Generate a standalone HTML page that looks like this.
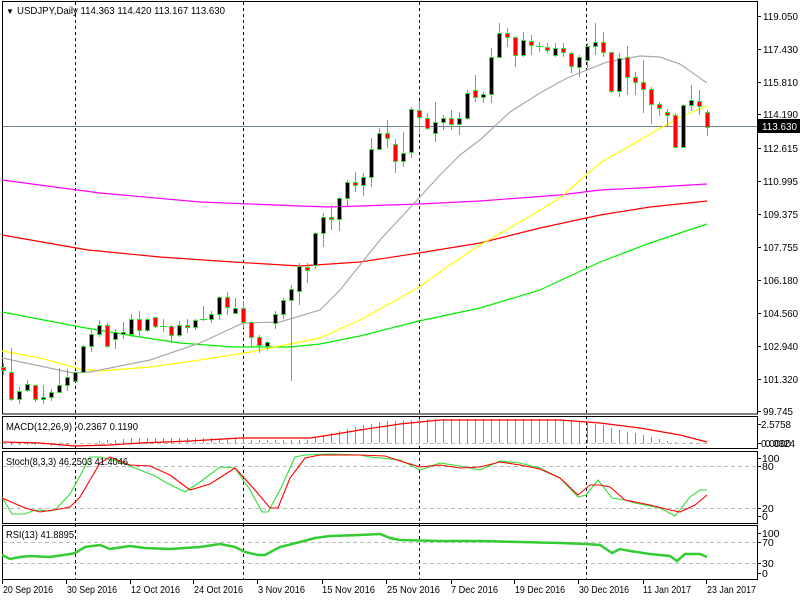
<!DOCTYPE html>
<html><head><meta charset="utf-8">
<style>
html,body{margin:0;padding:0;background:#fff;}
svg{display:block;font-family:"Liberation Sans",sans-serif;}
text{font-size:10.5px;fill:#000;}
</style></head><body>
<svg width="800" height="600" viewBox="0 0 800 600" xmlns="http://www.w3.org/2000/svg">
<rect width="800" height="600" fill="#fff"/>
<g fill="none" stroke="#000" stroke-width="1" shape-rendering="crispEdges">
<rect x="2.5" y="1.5" width="755" height="412.5"/>
<rect x="2.5" y="416.5" width="755" height="32"/>
<rect x="2.5" y="451.5" width="755" height="72"/>
<rect x="2.5" y="525.5" width="755" height="54"/>
</g>
<g stroke="#000" stroke-dasharray="3,3" shape-rendering="crispEdges">
<line x1="75.5" y1="2" x2="75.5" y2="579"/>
<line x1="243.5" y1="2" x2="243.5" y2="579"/>
<line x1="419.5" y1="2" x2="419.5" y2="579"/>
<line x1="586.5" y1="2" x2="586.5" y2="579"/>
</g>
<line x1="3" y1="126.5" x2="757" y2="126.5" stroke="#708090" shape-rendering="crispEdges"/>
<g fill="none" stroke-width="1.2">
<polyline stroke="#ff00ff" points="2,180 100,193 200,202 300,206 330,207 419,204 480,201 560,195 600,190 640,188 707,184"/>
<polyline stroke="#ff0000" points="2,235 88,250 160,257 233,262 300,266 360,262 419,253 480,243 540,228 600,215 650,207 707,201"/>
<polyline stroke="#00ee00" points="2,312 80,327 140,337 180,343 233,347 290,347 320,344 360,336 419,321 480,308 540,290 600,262 650,243 707,224"/>
<polyline stroke="#ffff00" points="2,351 40,358 80,369 100,371 150,367 200,360 250,352 280,346 320,338 360,320 400,298 419,287 450,265 480,245 520,222 560,198 600,163 640,140 680,117 707,106"/>
<polyline stroke="#a9a9a9" points="2,358 40,366 73,373 90,372 150,360 200,343 243,323 280,322 320,310 340,290 380,240 419,198 440,175 460,155 480,140 510,112 540,93 567,78 607,62 640,56 660,57 680,64 707,83"/>
</g>
<path fill="none" stroke="#22dd22" stroke-width="1" shape-rendering="crispEdges" d="
M3.5 363V375M11.5 348V401M19.5 387V404M27.5 380V392M35.5 385V402M43.5 385V404M51.5 389V401M59.5 368V393M67.5 369V391M75.5 372V382
M83.5 345V372M91.5 330V352M99.5 320V337M107.5 323V347M115.5 329V349M123.5 322V339M131.5 314V337M139.5 311V337M147.5 318V332M155.5 317V328
M163.5 319V332M171.5 325V343M179.5 321V337M187.5 319V333M195.5 319V330M203.5 306V321M211.5 311V323M219.5 296V319M227.5 292V315M235.5 298V313
M243.5 301V328M251.5 321V347M259.5 335V353M267.5 341V350M275.5 311V329M283.5 298V319M291.5 285V381M299.5 263V305M307.5 263V283M315.5 232V269
M323.5 213V247M331.5 205V230M339.5 197V231M347.5 180V206M355.5 172V192M363.5 173V196M371.5 138V187M379.5 128V149M387.5 120V148M395.5 139V173
M403.5 132V167M411.5 107V158M419.5 101V133M427.5 113V130M435.5 102V142M443.5 115V130M451.5 110V130M459.5 112V135M467.5 90V120M475.5 75V102
M483.5 92V103M491.5 48V103M499.5 23V57M507.5 28V47M515.5 37V67M523.5 32V57M531.5 35V55M539.5 42V52M547.5 43V53M555.5 43V57
M563.5 43V57M571.5 52V73M579.5 55V77M587.5 43V68M595.5 23V55M603.5 32V57M611.5 52V93M619.5 53V97M627.5 46V95M635.5 72V95
M643.5 60V113M651.5 87V124M659.5 102V116M667.5 109V126M675.5 113V147M683.5 104V148M691.5 85V111M699.5 90V115M707.5 110V136
M160 326.5H167M200 319.5H207M536 46.5H543"/>
<g stroke="#22ee22" stroke-width="1" shape-rendering="crispEdges">
<g fill="#ff0000">
<rect x="1.5" y="367.5" width="4" height="3"/><rect x="9.5" y="372.5" width="4" height="27"/><rect x="33.5" y="385.5" width="4" height="14"/>
<rect x="105.5" y="325.5" width="4" height="21"/><rect x="137.5" y="319.5" width="4" height="11"/><rect x="153.5" y="317.5" width="4" height="9"/>
<rect x="169.5" y="326.5" width="4" height="9"/><rect x="185.5" y="325.5" width="4" height="2"/><rect x="225.5" y="297.5" width="4" height="10"/>
<rect x="241.5" y="308.5" width="4" height="14"/><rect x="249.5" y="322.5" width="4" height="15"/><rect x="257.5" y="337.5" width="4" height="8"/>
<rect x="305.5" y="267.5" width="4" height="3"/><rect x="329.5" y="217.5" width="4" height="2"/><rect x="353.5" y="182.5" width="4" height="3"/>
<rect x="385.5" y="133.5" width="4" height="5"/><rect x="393.5" y="144.5" width="4" height="17"/><rect x="417.5" y="110.5" width="4" height="7"/>
<rect x="425.5" y="118.5" width="4" height="10"/><rect x="449.5" y="118.5" width="4" height="6"/><rect x="473.5" y="90.5" width="4" height="7"/>
<rect x="505.5" y="33.5" width="4" height="4"/><rect x="513.5" y="37.5" width="4" height="18"/><rect x="529.5" y="41.5" width="4" height="4"/>
<rect x="545.5" y="47.5" width="4" height="3"/><rect x="561.5" y="48.5" width="4" height="4"/><rect x="569.5" y="53.5" width="4" height="13"/>
<rect x="601.5" y="42.5" width="4" height="10"/><rect x="609.5" y="52.5" width="4" height="39"/><rect x="625.5" y="57.5" width="4" height="20"/>
<rect x="633.5" y="77.5" width="4" height="5"/><rect x="641.5" y="82.5" width="4" height="7"/><rect x="649.5" y="89.5" width="4" height="15"/>
<rect x="657.5" y="104.5" width="4" height="4"/><rect x="665.5" y="112.5" width="4" height="3"/><rect x="673.5" y="115.5" width="4" height="32"/>
<rect x="697.5" y="101.5" width="4" height="5"/><rect x="705.5" y="112.5" width="4" height="15"/>
</g>
<g fill="#000">
<rect x="17.5" y="391.5" width="4" height="8"/><rect x="25.5" y="384.5" width="4" height="6"/><rect x="41.5" y="397.5" width="4" height="2"/>
<rect x="49.5" y="392.5" width="4" height="5"/><rect x="57.5" y="385.5" width="4" height="7"/><rect x="65.5" y="377.5" width="4" height="8"/>
<rect x="73.5" y="372.5" width="4" height="9"/><rect x="81.5" y="346.5" width="4" height="26"/><rect x="89.5" y="334.5" width="4" height="12"/>
<rect x="97.5" y="325.5" width="4" height="9"/><rect x="113.5" y="332.5" width="4" height="7"/><rect x="121.5" y="332.5" width="4" height="2"/>
<rect x="129.5" y="319.5" width="4" height="15"/><rect x="145.5" y="319.5" width="4" height="11"/><rect x="177.5" y="325.5" width="4" height="10"/>
<rect x="193.5" y="320.5" width="4" height="7"/><rect x="209.5" y="314.5" width="4" height="5"/><rect x="217.5" y="297.5" width="4" height="17"/>
<rect x="233.5" y="308.5" width="4" height="5"/><rect x="265.5" y="342.5" width="4" height="4"/><rect x="273.5" y="314.5" width="4" height="9"/>
<rect x="281.5" y="300.5" width="4" height="14"/><rect x="289.5" y="289.5" width="4" height="11"/><rect x="297.5" y="266.5" width="4" height="25"/>
<rect x="313.5" y="233.5" width="4" height="32"/><rect x="321.5" y="217.5" width="4" height="16"/><rect x="337.5" y="198.5" width="4" height="21"/>
<rect x="345.5" y="182.5" width="4" height="16"/><rect x="361.5" y="177.5" width="4" height="8"/><rect x="369.5" y="149.5" width="4" height="28"/>
<rect x="377.5" y="133.5" width="4" height="16"/><rect x="401.5" y="153.5" width="4" height="8"/><rect x="409.5" y="109.5" width="4" height="43"/>
<rect x="433.5" y="122.5" width="4" height="11"/><rect x="441.5" y="118.5" width="4" height="4"/><rect x="457.5" y="118.5" width="4" height="6"/>
<rect x="465.5" y="93.5" width="4" height="25"/><rect x="481.5" y="94.5" width="4" height="3"/><rect x="489.5" y="57.5" width="4" height="37"/>
<rect x="497.5" y="33.5" width="4" height="24"/><rect x="521.5" y="40.5" width="4" height="15"/><rect x="553.5" y="48.5" width="4" height="7"/>
<rect x="577.5" y="57.5" width="4" height="10"/><rect x="585.5" y="46.5" width="4" height="14"/><rect x="593.5" y="42.5" width="4" height="4"/>
<rect x="617.5" y="58.5" width="4" height="33"/><rect x="681.5" y="105.5" width="4" height="42"/><rect x="689.5" y="100.5" width="4" height="5"/>
</g>
</g>
<text x="6" y="14" style="font-size:8px">▼</text>
<text x="17" y="14" textLength="208" lengthAdjust="spacingAndGlyphs">USDJPY,Daily  114.363 114.420 113.167 113.630</text>
<g stroke="#000" shape-rendering="crispEdges">
<path d="M757 16.5h4M757 49.5h4M757 82.5h4M757 114.5h4M757 148.5h4M757 181.5h4M757 214.5h4M757 247.5h4M757 280.5h4M757 313.5h4M757 346.5h4M757 379.5h4M757 411.5h4M757 424.5h4M757 443.5h4M757 458.5h4M757 466.5h4M757 508.5h4M757 516.5h4M757 533.5h4M757 542.5h4M757 563.5h4M757 573.5h4"/>
<path d="M2.5 580v4M66.5 580v4M130.5 580v4M193.5 580v4M257.5 580v4M322.5 580v4M386.5 580v4M451.5 580v4M514.5 580v4M578.5 580v4M643.5 580v4M706.5 580v4"/>
</g>
<g>
<text x="763" y="20" textLength="35" lengthAdjust="spacingAndGlyphs">119.050</text><text x="763" y="53" textLength="35" lengthAdjust="spacingAndGlyphs">117.430</text><text x="763" y="86" textLength="35" lengthAdjust="spacingAndGlyphs">115.810</text><text x="763" y="118" textLength="35" lengthAdjust="spacingAndGlyphs">114.190</text>
<text x="763" y="152" textLength="35" lengthAdjust="spacingAndGlyphs">112.615</text><text x="763" y="185" textLength="35" lengthAdjust="spacingAndGlyphs">110.995</text><text x="763" y="218" textLength="35" lengthAdjust="spacingAndGlyphs">109.375</text><text x="763" y="251" textLength="35" lengthAdjust="spacingAndGlyphs">107.755</text>
<text x="763" y="284" textLength="35" lengthAdjust="spacingAndGlyphs">106.180</text><text x="763" y="317" textLength="35" lengthAdjust="spacingAndGlyphs">104.560</text><text x="763" y="350" textLength="35" lengthAdjust="spacingAndGlyphs">102.940</text><text x="763" y="383" textLength="35" lengthAdjust="spacingAndGlyphs">101.320</text>
<text x="763" y="415" textLength="30" lengthAdjust="spacingAndGlyphs">99.745</text>
</g>
<rect x="758" y="119" width="42" height="14" fill="#000"/>
<text x="762" y="130" style="fill:#fff" textLength="35" lengthAdjust="spacingAndGlyphs">113.630</text>
<line x1="3" y1="443.5" x2="707" y2="443.5" stroke="#bbb" stroke-dasharray="4,3"/>
<path stroke="#33cc33" fill="none" shape-rendering="crispEdges" d="M11.5 443V445M19.5 443V445M27.5 443V445M35.5 443V445M43.5 443V445M51.5 443V446M59.5 443V446M67.5 443V446M99.5 443V441M107.5 443V440M115.5 443V440M123.5 443V439M131.5 443V438M139.5 443V438M147.5 443V438M155.5 443V438M163.5 443V438M171.5 443V438M179.5 443V438M187.5 443V438M195.5 443V438M203.5 443V438M211.5 443V438M219.5 443V438M227.5 443V438M235.5 443V438M243.5 443V438M251.5 443V440M259.5 443V440M267.5 443V440M275.5 443V440M283.5 443V440M291.5 443V440M299.5 443V440M307.5 443V440M315.5 443V437M323.5 443V435M331.5 443V433M339.5 443V431M347.5 443V429M355.5 443V427M363.5 443V425M371.5 443V424M379.5 443V422M387.5 443V421M395.5 443V421M403.5 443V420M411.5 443V420M419.5 443V419M427.5 443V419M435.5 443V419M443.5 443V419M451.5 443V419M459.5 443V419M467.5 443V419M475.5 443V419M483.5 443V419M491.5 443V419M499.5 443V419M507.5 443V419M515.5 443V419M523.5 443V419M531.5 443V419M539.5 443V419M547.5 443V419M555.5 443V419M563.5 443V420M571.5 443V421M579.5 443V422M587.5 443V423M595.5 443V424M603.5 443V425M611.5 443V428M619.5 443V430M627.5 443V432M635.5 443V433M643.5 443V435M651.5 443V437M659.5 443V439M667.5 443V441M675.5 443V442M691.5 443V442"/>
<polyline fill="none" stroke="#ff0000" stroke-width="1.2" points="2,442 40,443 75,446 110,445 140,443 190,441 240,438 265,438 310,438 330,435 360,430 400,424 440,420 500,420 560,420 600,423 640,428 680,435 707,442"/>
<text x="6" y="430" textLength="132" lengthAdjust="spacingAndGlyphs">MACD(12,26,9) -0.2367 0.1190</text>
<text x="761" y="428" textLength="30" lengthAdjust="spacingAndGlyphs">2.5758</text>
<text x="761" y="447" textLength="30" lengthAdjust="spacingAndGlyphs">0.0000</text><text x="765" y="447" textLength="30" lengthAdjust="spacingAndGlyphs">0.0324</text>
<line x1="3" y1="466.5" x2="757" y2="466.5" stroke="#bbb" stroke-dasharray="4,3"/>
<line x1="3" y1="508.5" x2="757" y2="508.5" stroke="#bbb" stroke-dasharray="4,3"/>
<polyline fill="none" stroke="#33dd33" stroke-width="1.1" points="2,497 12,514 25,514 35,510 50,511 55,510 70,494 80,476 90,457 100,457 120,462 130,466 155,476 165,482 185,492 200,482 220,467 235,468 250,490 262,512 268,512 280,490 295,457 305,455 330,454 360,455 370,457 380,458 400,460 420,470 440,463 460,466 480,470 500,461 520,463 540,468 560,478 578,497 586,495 598,480 612,498 625,500 635,503 645,505 660,508 675,516 690,497 700,490 707,490"/>
<polyline fill="none" stroke="#ff0000" stroke-width="1.1" points="2,498 25,508 40,512 60,509 70,507 80,497 90,480 100,463 110,457 130,465 150,466 170,475 190,490 210,484 235,468 255,490 270,508 278,508 290,478 305,458 320,455 360,455 385,456 400,461 420,467 440,465 460,468 480,467 500,462 520,465 540,469 560,478 578,495 590,485 600,485 610,487 625,500 650,505 670,510 680,512 695,505 707,495"/>
<text x="6" y="465" textLength="122" lengthAdjust="spacingAndGlyphs">Stoch(8,3,3) 46.2503 41.4046</text>
<text x="762" y="462">100</text><text x="762" y="470">80</text><text x="762" y="512">20</text><text x="762" y="520">0</text>
<line x1="3" y1="542.5" x2="757" y2="542.5" stroke="#bbb" stroke-dasharray="4,3"/>
<line x1="3" y1="563.5" x2="757" y2="563.5" stroke="#bbb" stroke-dasharray="4,3"/>
<polyline fill="none" stroke="#33cc33" stroke-width="2.5" points="2,555 10,559 20,557 30,556 50,557 70,554 75,553 85,547 100,545 110,549 130,546 145,548 170,549 200,547 220,544 235,547 245,552 258,555 265,555 280,547 300,542 315,538 330,536 360,535 380,534 390,538 400,540 440,541 480,541 520,542 560,543 586,544 600,545 612,553 620,549 630,551 650,554 670,556 677,561 685,554 700,554 707,557"/>
<text x="6" y="538" textLength="68" lengthAdjust="spacingAndGlyphs">RSI(13) 41.8895</text>
<text x="762" y="537">100</text><text x="762" y="546">70</text><text x="762" y="567">30</text><text x="762" y="577">0</text>
<g>
<text x="3" y="593" textLength="50" lengthAdjust="spacingAndGlyphs">20 Sep 2016</text><text x="67" y="593" textLength="50" lengthAdjust="spacingAndGlyphs">30 Sep 2016</text><text x="131" y="593" textLength="49" lengthAdjust="spacingAndGlyphs">12 Oct 2016</text>
<text x="194" y="593" textLength="49" lengthAdjust="spacingAndGlyphs">24 Oct 2016</text><text x="258" y="593" textLength="47" lengthAdjust="spacingAndGlyphs">3 Nov 2016</text><text x="322" y="593" textLength="53" lengthAdjust="spacingAndGlyphs">15 Nov 2016</text>
<text x="387" y="593" textLength="53" lengthAdjust="spacingAndGlyphs">25 Nov 2016</text><text x="451" y="593" textLength="47" lengthAdjust="spacingAndGlyphs">7 Dec 2016</text><text x="515" y="593" textLength="50" lengthAdjust="spacingAndGlyphs">19 Dec 2016</text>
<text x="579" y="593" textLength="50" lengthAdjust="spacingAndGlyphs">30 Dec 2016</text><text x="643" y="593" textLength="48" lengthAdjust="spacingAndGlyphs">11 Jan 2017</text><text x="707" y="593" textLength="49" lengthAdjust="spacingAndGlyphs">23 Jan 2017</text>
</g>
</svg>
</body></html>
